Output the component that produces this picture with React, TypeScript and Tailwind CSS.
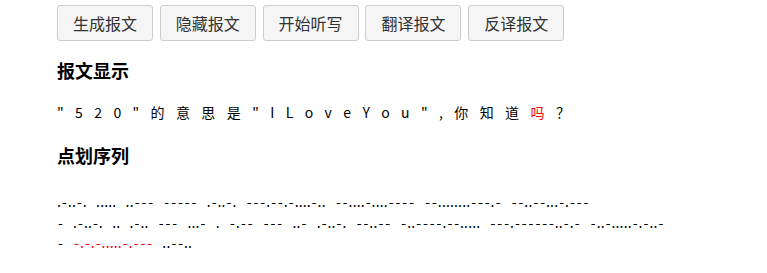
import React from "react";

const buttons = ["生成报文", "隐藏报文", "开始听写", "翻译报文", "反译报文"];

const display: { c: string; red?: boolean }[] = [
  ...'"520"的意思是"ILoveYou",你知道'.split("").map((c) => ({ c })),
  { c: "吗", red: true },
  { c: "？" },
];

function Morse({ s, red }: { s: string; red?: boolean }) {
  return (
    <span className={red ? "text-[#ff0000]" : "text-black"}>
      {s.split("").map((c, i) =>
        c === "." ? (
          <span key={i} className="inline-block w-[4.05px]">
            .
          </span>
        ) : c === "-" ? (
          <span key={i} className="inline-block w-[6.8px] text-center">
            -
          </span>
        ) : (
          <span key={i} className="inline-block w-[9.3px]">
            {"\u00a0"}
          </span>
        )
      )}
    </span>
  );
}

export default function App() {
  return (
    <div className="w-[767px] h-[273px] bg-white pl-[57px] pt-[5px] font-['Noto_Sans_CJK_SC',sans-serif] text-black">
      <div className="flex gap-[6.8px]">
        {buttons.map((b) => (
          <button
            key={b}
            className="w-[96px] h-[36px] border border-[#cccccc] bg-[#f5f5f5] rounded-[3px] text-[16px] text-[#333333] leading-none"
          >
            {b}
          </button>
        ))}
      </div>
      <h3 className="mt-[17px] text-[18px] leading-[25px] font-bold">报文显示</h3>
      <div className="mt-[19px] text-[14px] leading-[20px] whitespace-nowrap">
        {display.map((d, i) => (
          <span key={i} className={"inline-block mr-[11.4px] " + (d.red ? "text-[#ff0000]" : "")}>
            {d.c}
          </span>
        ))}
      </div>
      <h3 className="mt-[21px] text-[18px] leading-[25px] font-bold">点划序列</h3>
      <div className="mt-[23px] text-[14px] leading-[20.5px] whitespace-nowrap">
        <div>
          <Morse s=".-..-. ..... ..--- ----- .-..-. ---.--.-....-.. --....-....---- --........---.- --..--...-.---" />
        </div>
        <div>
          <Morse s="- .-..-. .. .-.. --- ...- . -.-- --- ..- .-..-. --..-- -..----.--..... ---.------..-.- -..-.....-.-..-" />
        </div>
        <div>
          <Morse s="- " />
          <Morse s="-.-.-.....-.---" red />
          <Morse s=" ..--.." />
        </div>
      </div>
    </div>
  );
}
